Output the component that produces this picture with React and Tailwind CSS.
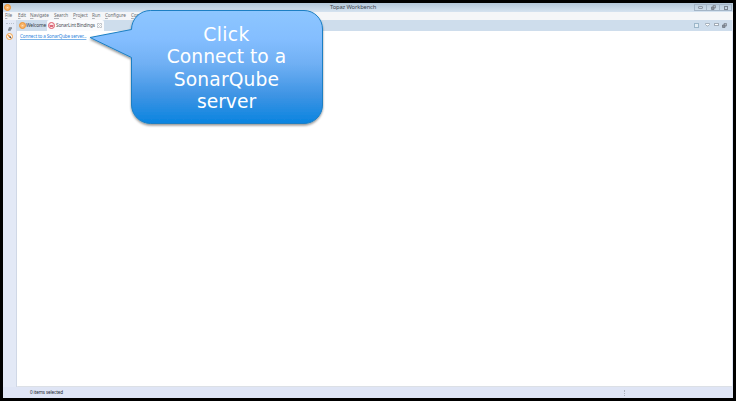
function OrangeIcon({ className = "" }) {
  return (
    <svg viewBox="0 0 14 14" className={"h-[7px] w-[7px] shrink-0 " + className}>
      <circle cx="7" cy="7" r="6" fill="#f9b566" stroke="#ef9232" strokeWidth="2" />
      <path d="M4 4l3 2 3-1-1 3 1 2-3-1-3 1 1-3z" fill="#fff3df" stroke="#f3a554" />
    </svg>
  );
}

function RedIcon() {
  return (
    <svg viewBox="0 0 14 14" className="h-[7px] w-[7px] shrink-0">
      <circle cx="7" cy="7" r="6" fill="#fbe4e6" stroke="#dc5a69" strokeWidth="2" />
      <path d="M3 7h8M4 9h6" fill="none" stroke="#d04054" strokeWidth="1.5" />
    </svg>
  );
}

function CompassIcon() {
  return (
    <svg viewBox="0 0 14 14" className="h-[7px] w-[7px] shrink-0">
      <circle cx="7" cy="7" r="6" fill="#fff8ec" stroke="#f2a044" strokeWidth="2" />
      <path d="M3 3l6 3-3 3z" fill="#ee8127" />
      <path d="M11 11L6 9l3-3z" fill="#46506a" />
    </svg>
  );
}

function RestoreIcon() {
  return (
    <svg viewBox="0 0 10 10" className="h-[5px] w-[5px] shrink-0">
      <path d="M4 1h5v5H4z" fill="#b0b7c1" stroke="#7e8692" strokeWidth="1.5" />
      <path d="M1 4h5v5H1z" fill="#8a929d" stroke="#6e7682" strokeWidth="1.5" />
    </svg>
  );
}

const menus = [
  ["F", "ile", "w-[13px]"],
  ["E", "dit", "w-[12px]"],
  ["N", "avigate", "w-[24px]"],
  ["Se", "arch", "w-[19px]"],
  ["P", "roject", "w-[19px]"],
  ["R", "un", "w-[13px]"],
  ["C", "onfigure", "w-[26px]"],
  ["C", "ompuware", "w-[30px]"],
];

function Callout() {
  return (
    <div className="absolute left-[84px] top-[4px] h-[128px] w-[248px]">
      <svg viewBox="84 4 248 128" className="absolute inset-0 h-full w-full">
        <defs>
          <linearGradient id="bubble" x1="0" y1="0" x2="0" y2="1">
            <stop offset="0" stopColor="#8dc6ff" />
            <stop offset=".25" stopColor="#84beff" />
            <stop offset=".47" stopColor="#70b0f4" />
            <stop offset=".75" stopColor="#3e94e4" />
            <stop offset="1" stopColor="#0a84e0" />
          </linearGradient>
          <filter id="shade" x="-10%" y="-10%" width="120%" height="125%">
            <feDropShadow dx="0" dy="1.6" stdDeviation="1.2" floodColor="#000" floodOpacity=".42" />
          </filter>
        </defs>
        <path
          d="M150.500 10.500H304A18.500 18.500 0 0 1 322.500 29V105A18.500 18.500 0 0 1 304 123.500H150.500A19 19 0 0 1 131.500 105V57.500L90 37.500 131.500 29.500A19 19 0 0 1 150.500 10.500Z"
          fill="url(#bubble)"
          stroke="#1b7fc4"
          filter="url(#shade)"
        />
      </svg>
      <p className="relative ml-[47px] w-[191px] pt-[20px] text-center font-['DejaVu_Sans',sans-serif] text-[18.700px] leading-[22.300px] text-white">
        <span className="tracking-[0.4px]">Click</span>
        <br />
        Connect to a
        <br />
        <span className="tracking-[0.15px]">SonarQube</span>
        <br />
        server
      </p>
    </div>
  );
}

export default function App() {
  return (
    <div className="relative flex h-[401px] w-[736px] overflow-hidden bg-black p-[3px] font-['Noto_Sans',sans-serif] text-[5px] leading-none whitespace-nowrap">
      <div className="flex min-w-0 flex-1 flex-col bg-[#dfe5f5]">
        <header className="flex h-[9px] items-center bg-gradient-to-b from-[#b3c7d9] to-[#d6e3f0] pl-px">
          <OrangeIcon />
          <h1 className="ml-[319px] w-[48px] text-[5.800px] font-normal tracking-[-0.15px] text-[#3c444d]">Topaz Workbench</h1>
          <div className="ml-auto mr-px flex h-[7px] text-[#717984]">
            <span className="flex w-[13px] items-center justify-center border border-[#a4b5c7]">
              <span className="h-[3px] w-[5px] rounded-[1px] border border-[#8e98a5]" />
            </span>
            <span className="flex w-[13px] items-center justify-center border border-l-0 border-[#a4b5c7]">
              <RestoreIcon />
            </span>
            <span className="flex w-[12px] items-center justify-center border border-l-0 border-[#a4b5c7]">
              <span className="h-[4px] w-[4px] border border-[#7b8490]" />
            </span>
          </div>
        </header>
        <nav className="flex h-[8px] items-center bg-[#f5f6f8] pb-px pl-[2px] text-[4.700px] tracking-[-0.12px] text-[#686c72]">
          {menus.map(([key, rest, width]) => (
            <span key={key + rest} className={width}>
              <span className="underline decoration-[#b0b3b8] decoration-[0.5px] underline-offset-[0.5px]">{key}</span>
              {rest}
            </span>
          ))}
        </nav>
        <div className="flex min-h-0 flex-1">
          <aside className="flex w-[14px] flex-col items-center border-r border-[#d0d8e6] bg-[#e3e9f6]">
            <span className="mt-[3px] h-px w-[8px] border-t border-dotted border-[#b9c0cc]" />
            <span className="mb-[2px] mt-[3px]">
              <svg viewBox="0 0 10 10" className="h-[4px] w-[4px]">
                <path d="M3 1h6v4H3zM1 5h5v4H1z" fill="#9aa3af" stroke="#6f7885" strokeWidth="1.5" />
              </svg>
            </span>
            <CompassIcon />
          </aside>
          <main className="flex min-w-0 flex-1 flex-col pr-px">
            <div className="flex h-[11px] items-center bg-[#ceddec]">
              <div className="flex h-full w-[30px] items-center pl-[2px] text-[#333b45]">
                <OrangeIcon />
                <span className="text-[4.900px] tracking-[-0.15px]">Welcome</span>
              </div>
              <div className="flex h-full w-[57px] items-center rounded-t-[2px] bg-[#fafbfd] pl-px text-[#4b5057]">
                <RedIcon />
                <span className="ml-px w-[40px] text-[4.700px] tracking-[-0.15px]">SonarLint Bindings</span>
                <svg viewBox="0 0 10 10" className="ml-px h-[5px] w-[5px]">
                  <path d="M1 1h3l1 2 1-2h3v3L7 5l2 1v3H6L5 7 4 9H1V6l2-1-2-1z" fill="#fff" stroke="#9299a3" />
                </svg>
              </div>
              <div className="ml-auto flex items-center pr-[5px]">
                <span className="mr-[6px] h-[5px] w-[5px] border border-[#9cb6c9] bg-[#e4eef5]" />
                <svg viewBox="0 0 10 8" className="mr-[4px] h-[4px] w-[5px] -translate-y-px">
                  <path d="M1 1h8v2L6 6H4L1 3z" fill="#fff" stroke="#929da9" strokeWidth="1.5" />
                </svg>
                <span className="mr-[3px] h-[3px] w-[5px] -translate-y-px border border-[#a2acb7] bg-white" />
                <RestoreIcon />
              </div>
            </div>
            <div className="flex flex-1 items-start rounded-b-[1px] border-b border-[#dce0e6] bg-white pl-[3px] pt-[3px]">
              <a className="text-[4.600px] tracking-[-0.13px] text-[#2f86dc] underline decoration-[#7db5ea] decoration-[0.5px] underline-offset-[0.5px]">
                Connect to a SonarQube server...
              </a>
            </div>
          </main>
        </div>
        <footer className="flex h-[11px] items-center pl-[27px] text-[4.600px] tracking-[-0.12px] text-[#20262f]">
          <span className="w-[34px]">0 items selected</span>
          <span className="ml-[560px] h-[6px] border-l border-dotted border-[#adb4c0]" />
        </footer>
      </div>
      <Callout />
    </div>
  );
}
